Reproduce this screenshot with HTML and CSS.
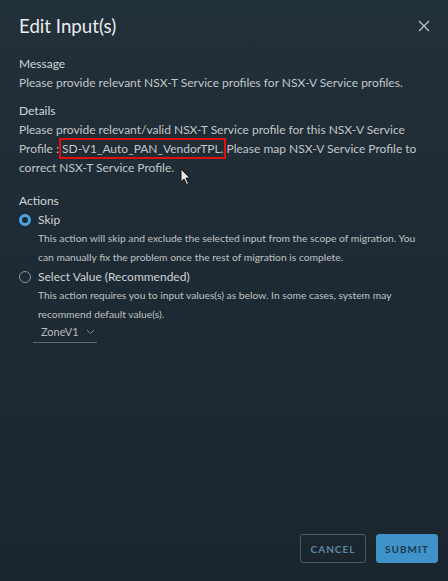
FILE: index.html
```html
<!DOCTYPE html>
<html>
<head>
<meta charset="utf-8">
<link rel="stylesheet" href="styles.css">
</head>
<body>
<div class="modal">
  <div class="header">
    <h1 class="title">Edit Input(s)</h1>
    <svg class="close" width="12" height="12" viewBox="0 0 12 12"><path d="M1 1 L11 11 M11 1 L1 11" stroke="#b9c3ca" stroke-width="1.4" fill="none"/></svg>
  </div>
  <div class="body">
    <div class="label">Message</div>
    <div class="text">Please provide relevant NSX-T Service profiles for NSX-V Service profiles.</div>
    <div class="label gap">Details</div>
    <div class="text">Please provide relevant/valid NSX-T Service profile for this NSX-V Service Profile : <span class="hl">SD-V1_Auto_PAN_VendorTPL.</span> Please map NSX-V Service Profile to correct NSX-T Service Profile.</div>
    <div class="label gap2">Actions</div>
    <div class="option">
      <span class="radio checked"></span><span class="opt-label">Skip</span>
    </div>
    <div class="desc">This action will skip and exclude the selected input from the scope of migration. You can manually fix the problem once the rest of migration is complete.</div>
    <div class="option">
      <span class="radio"></span><span class="opt-label">Select Value (Recommended)</span>
    </div>
    <div class="desc">This action requires you to input values(s) as below. In some cases, system may recommend default value(s).</div>
    <div class="select">ZoneV1 <svg width="9" height="6" viewBox="0 0 9 6"><path d="M1 1 L4.5 4.5 L8 1" stroke="#7f8f9a" stroke-width="1" fill="none"/></svg></div>
  </div>
  <div class="footer">
    <button class="btn cancel">CANCEL</button>
    <button class="btn submit">SUBMIT</button>
  </div>
  <svg class="cursor" width="12" height="18" viewBox="0 0 12 18"><path d="M1 1 L1 14 L4 11 L6.5 16.5 L8.5 15.5 L6 10 L10 10 Z" fill="#e6e6e6" stroke="#111" stroke-width="1"/></svg>
</div>
</body>
</html>
```

FILE: styles.css
```css
html, body {
  margin: 0;
  padding: 0;
  height: 100%;
}
body {
  background: #1e2a33;
  font-family: "Lato", "Open Sans", sans-serif;
}
.modal {
  position: relative;
  height: 581px;
  box-sizing: border-box;
  background: linear-gradient(180deg, #22303a 0%, #1e2a33 50%, #1b252d 100%);
  display: flex;
  flex-direction: column;
  color: #c6c9cb;
}
.header {
  display: flex;
  justify-content: space-between;
  align-items: center;
  padding: 14px 18px 0 19px;
}
.title {
  margin: 0;
  font-weight: 400;
  font-size: 18.7px;
  line-height: 24px;
  color: #e9ecee;
}
.body {
  padding: 16px 19px 0 19px;
  flex: 1;
}
.label {
  font-size: 12px;
  line-height: 19px;
  color: #d3d6d8;
}
.label.gap { margin-top: 9px; }
.label.gap2 { margin-top: 14px; }
.text {
  font-size: 12px;
  line-height: 19px;
  color: #c3c6c8;
}
.hl {
  outline: 2px solid #e0100f;
  outline-offset: 1px;
}
.option {
  display: flex;
  align-items: center;
  height: 19px;
}
.radio {
  width: 10px;
  height: 10px;
  border-radius: 50%;
  border: 1px solid #8096a6;
  margin-right: 7px;
  box-sizing: content-box;
  flex: none;
}
.radio.checked {
  width: 6px;
  height: 6px;
  border: 3px solid #4aa6e0;
  background: #1b2a36;
}
.opt-label {
  font-size: 12px;
  color: #cfd2d4;
}
.desc {
  padding-left: 19px;
  font-size: 10.3px;
  line-height: 19px;
  color: #bfc2c4;
}
.select {
  margin: 0 0 0 14px;
  width: 64px;
  box-sizing: border-box;
  padding: 1px 0 3px 8px;
  border-bottom: 1px solid #5c6c77;
  font-size: 11px;
  line-height: 14px;
  color: #b7bcc0;
  display: flex;
  align-items: center;
  gap: 7px;
}
.footer {
  display: flex;
  justify-content: flex-end;
  gap: 10px;
  padding: 0 10px 18px 0;
}
.btn {
  height: 29px;
  font-family: "Lato", sans-serif;
  font-weight: 700;
  font-size: 10px;
  letter-spacing: 1px;
  border-radius: 3px;
  padding: 0;
}
.cancel {
  width: 66px;
  background: transparent;
  border: 1px solid #435b6d;
  color: #5a88a6;
}
.submit {
  width: 62px;
  background: #3f93c9;
  border: 1px solid #3f93c9;
  color: #1c3b50;
}
.cursor {
  position: absolute;
  left: 180px;
  top: 168px;
}
```
